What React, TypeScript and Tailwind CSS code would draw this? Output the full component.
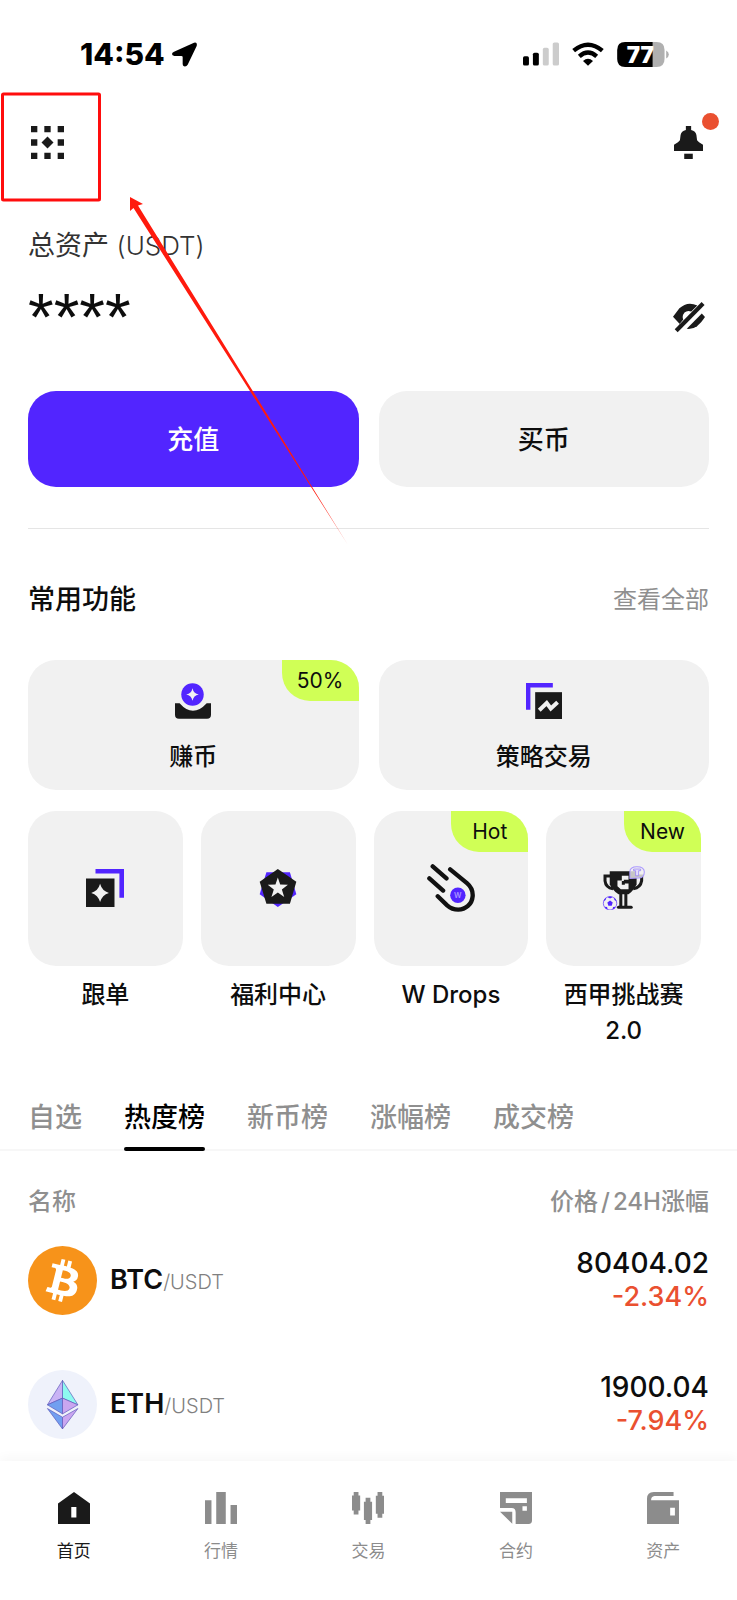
import type { ReactNode } from "react";

type IconProps = { className?: string };

const MenuIcon = ({ className }: IconProps) => (
  <svg viewBox="0 0 99 99" className={className} fill="#1a1a1a" aria-hidden="true">
    <path d="M0 0h19v19H0zM40 0h19v19H40zM80 0h19v19H80zM0 40h19v19H0zM80 40h19v19H80zM0 80h19v19H0zM40 80h19v19H40zM80 80h19v19H80z" />
    <path d="M49.500 31.500L67.500 49.500L49.500 67.500L31.500 49.500z" />
  </svg>
);

const BellIcon = ({ className }: IconProps) => (
  <svg viewBox="0 0 88 100" className={className} fill="#1a1a1a" aria-hidden="true">
    <path d="M36 0H52V12Q66 15 68 27L70 43L76 49L88 57V76H0V57L12 49L18 43L20 27Q22 15 36 12z" />
    <path d="M31 84h26v16H31z" />
  </svg>
);

const EyeOffIcon = ({ className }: IconProps) => (
  <svg viewBox="0 0 100 94" className={className} fill="#1a1a1a" aria-hidden="true">
    <path d="M0 46L20 20Q45 -4 76 11L57 30Q45 25 36 33Q27 44 32 55L20 70L24 72Z" />
    <path d="M90 36L100 47Q88 66 75 76Q62 86 43 84Z" />
    <path d="M10 90L94 5" stroke="#1a1a1a" strokeWidth="13" fill="none" />
  </svg>
);

const LocationIcon = ({ className }: IconProps) => (
  <svg viewBox="0 0 75 73" className={className} aria-hidden="true">
    <path d="M66 1Q77 -2 74 11L47 67Q43 74 36 72Q32 71 32 65V43Q31 41 28 41H7Q0 40 0 35Q0 30 6 28Z" />
  </svg>
);

const SignalIcon = ({ className }: IconProps) => (
  <svg viewBox="0 0 109 70" className={className} aria-hidden="true">
    <rect x="0" y="42" width="18" height="28" rx="5" />
    <rect x="30" y="31" width="18" height="39" rx="5" />
    <rect x="60" y="16" width="18" height="54" rx="5" fill="#ccc" />
    <rect x="90" y="0" width="19" height="70" rx="5" fill="#ccc" />
  </svg>
);

const WifiIcon = ({ className }: IconProps) => (
  <svg viewBox="0 0 96 70" className={className} aria-hidden="true">
    <path d="M5 25Q48 -11 91 25" fill="none" stroke="#000" strokeWidth="13" />
    <path d="M22 42Q48 19 74 42" fill="none" stroke="#000" strokeWidth="13" />
    <path d="M48 70L33 56Q48 42 63 56Z" />
  </svg>
);

const BatteryIcon = ({ className }: IconProps) => (
  <svg viewBox="0 0 157 76" className={className} role="img" aria-label="77">
    <path d="M108 0H120Q144 0 144 24V52Q144 76 120 76H108z" fill="#b0b0b0" />
    <path d="M108 0H24Q0 0 0 24V52Q0 76 24 76H108z" />
    <path d="M149 26Q157 30 157 38Q157 46 149 50z" fill="#b0b0b0" />
    <text x="70" y="63" textAnchor="middle" fontSize="68" fontWeight="900" fill="#fff">
      77
    </text>
  </svg>
);

const EarnIcon = ({ className }: IconProps) => (
  <svg viewBox="0 0 109 107" className={className} aria-hidden="true">
    <circle cx="53" cy="34" r="34" fill="#5225ff" />
    <path d="M53 15Q56 31 72 34Q56 37 53 53Q50 37 34 34Q50 31 53 15z" fill="#f1f1f1" />
    <path d="M0 60H14Q54 106 96 60H109V95Q109 107 97 107H12Q0 107 0 95z" fill="#1a1a1a" />
  </svg>
);

const StrategyIcon = ({ className }: IconProps) => (
  <svg viewBox="0 0 106 106" className={className} aria-hidden="true">
    <path d="M0 0H79V13H13V79H0z" fill="#5225ff" />
    <path d="M27 27h79v79H27z" fill="#1a1a1a" />
    <path d="M39 80L61 59L73 75L93 57" fill="none" stroke="#f1f1f1" strokeWidth="12" />
  </svg>
);

const CopyTradeIcon = ({ className }: IconProps) => (
  <svg viewBox="0 0 116 116" className={className} aria-hidden="true">
    <path d="M29 0H116V88H102V14H29z" fill="#5225ff" />
    <path d="M0 29h87v87H0z" fill="#1a1a1a" />
    <path d="M43 45Q49 67 70 73Q49 79 43 101Q37 79 16 73Q37 67 43 45z" fill="#f1f1f1" />
  </svg>
);

const BenefitIcon = ({ className }: IconProps) => (
  <svg viewBox="0 0 109 113" className={className} aria-hidden="true">
    <path d="M54 113L0 75L20 10H90L109 75z" fill="#5225ff" />
    <path d="M54 0L109 38L90 103H20L0 38z" fill="#1a1a1a" />
    <path
      d="M54 25L61 46L84 47L66 61L73 83L54 70L35 83L42 61L24 47L47 46z"
      fill="#f1f1f1"
    />
  </svg>
);

const DropsIcon = ({ className }: IconProps) => (
  <svg viewBox="0 0 143 143" className={className} aria-hidden="true">
    <g fill="none" stroke="#111" strokeWidth="13" strokeLinecap="round">
      <path d="M17 7L58 43M7 43L48 79" />
      <path d="M69 16L119 57C132 68 137 82 136 96C134 120 115 136 93 136C80 136 69 131 60 123L32 96" />
    </g>
    <circle cx="92" cy="93" r="23" fill="#5225ff" />
    <text x="92" y="101" textAnchor="middle" fontSize="22" fontWeight="600" fill="#a996ff">
      W
    </text>
  </svg>
);

const TrophyIcon = ({ className }: IconProps) => (
  <svg viewBox="0 0 125 131" className={className} aria-hidden="true">
    <g fill="none" stroke="#1a1a1a" strokeWidth="9">
      <path d="M22 30H6V44Q8 64 30 68" />
      <path d="M98 30H115V44Q112 64 90 68" />
      <path d="M53 78V123M68 78V123" />
      <path d="M46 123H84" strokeLinecap="round" />
    </g>
    <path d="M20 16H100V54Q94 70 76 84H46Q26 70 20 54z" fill="#1a1a1a" />
    <path d="M56 29H76V41H62V45H56V56H65V52H76V69H53L43 60V43H56z" fill="#f1f1f1" />
    <path
      d="M80 37V17Q80 2 101 2Q123 2 123 18Q123 36 105 36z"
      fill="#f1f1f1"
      fillOpacity=".8"
      stroke="#a996ff"
      strokeWidth="3"
    />
    <path d="M91 9H112V14H106V29H97V14H91z" fill="#e4defc" stroke="#8d76f5" strokeWidth="2" />
    <circle cx="21" cy="111" r="20" fill="#f1f1f1" stroke="#5225ff" strokeWidth="2" />
    <g fill="#5225ff">
      <path d="M21 103L29 109L26 118H16L13 109z" />
      <path d="M14 93L21 97L28 93L24 91H18zM2 105L8 101L9 94L4 99zM40 105L34 101L33 94L38 99zM5 121L12 122L14 129L8 127zM37 121L30 122L28 129L34 127z" />
    </g>
  </svg>
);

const BtcIcon = ({ className }: IconProps) => (
  <svg viewBox="0 0 32 32" className={className} aria-hidden="true">
    <circle cx="16" cy="16" r="16" fill="#f7931a" />
    <path
      fill="#fff"
      d="M23.189 14.02c.314-2.096-1.283-3.223-3.465-3.975l.708-2.84-1.728-.43-.69 2.765c-.454-.114-.92-.22-1.385-.326l.695-2.783L15.596 6l-.708 2.839c-.376-.086-.746-.17-1.104-.26l.002-.009-2.384-.595-.46 1.846s1.283.294 1.256.312c.7.175.826.638.805 1.006l-.806 3.235c.048.012.11.03.18.057l-.183-.045-1.13 4.532c-.086.212-.303.531-.793.41.018.025-1.256-.313-1.256-.313l-.858 1.978 2.25.561c.418.105.828.215 1.231.318l-.715 2.872 1.727.43.708-2.84c.472.127.93.245 1.378.357l-.706 2.828 1.728.43.715-2.866c2.948.558 5.164.333 6.097-2.333.752-2.146-.037-3.385-1.588-4.192 1.13-.26 1.98-1.003 2.207-2.538zm-3.95 5.538c-.533 2.147-4.148.986-5.32.695l.95-3.805c1.172.293 4.929.872 4.37 3.11zm.535-5.569c-.487 1.953-3.495.96-4.47.717l.86-3.45c.975.243 4.118.696 3.61 2.733z"
    />
  </svg>
);

const EthIcon = ({ className }: IconProps) => (
  <svg viewBox="0 0 206 206" className={className} aria-hidden="true">
    <circle cx="103" cy="103" r="103" fill="#eff2fb" />
    <g stroke="#5c55b8" strokeWidth="2" strokeLinejoin="round">
      <path d="M103 31L58 104L103 84z" fill="#c9b3f5" />
      <path d="M103 31L149 104L103 84z" fill="#8dfaf0" />
      <path d="M58 104L103 84V131z" fill="#719ff0" />
      <path d="M149 104L103 84V131z" fill="#caa6f0" />
      <path d="M58 115L103 141V176z" fill="#719ff0" />
      <path d="M149 115L103 141V176z" fill="#caa6f0" />
    </g>
  </svg>
);

const NavSvg = ({ children }: { children: ReactNode }) => (
  <svg viewBox="0 0 94 94" className="h-8 w-8" fill="currentColor" fillRule="evenodd" aria-hidden="true">
    {children}
  </svg>
);

const navItems = [
  {
    label: "首页",
    active: true,
    icon: <path d="M47 0L94 34V94H0V34zM39 44V75H54V44z" />,
  },
  {
    label: "行情",
    icon: <path d="M0 24h19v70H0zM33 0h28v94H33zM75 38h19v56H75z" />,
  },
  {
    label: "交易",
    icon: (
      <path d="M5 0H19V10H24V54H19V66H5V54H0V10H5zM40 17H54V29H59V82H54V94H40V82H35V29H40zM75 0H89V11H94V64H89V76H75V64H70V11H75z" />
    ),
  },
  {
    label: "合约",
    icon: (
      <path d="M0 0H94V84Q94 94 84 94H46V60Q46 47 34 47H0zM17 18V32H79V18zM66 42V55H79V42zM0 58H36V93z" />
    ),
  },
  {
    label: "资产",
    icon: <path d="M20 0H78V12H22Q12 13 12 24H94V94H0V20Q0 0 20 0zM68 46V69H82V46z" />,
  },
];

const wideFeatures = [
  { label: "赚币", badge: "50%", icon: <EarnIcon className="h-9 w-9" /> },
  { label: "策略交易", icon: <StrategyIcon className="h-9 w-9" /> },
];

const features = [
  { label: "跟单", icon: <CopyTradeIcon className="h-[38px] w-[38px]" /> },
  { label: "福利中心", icon: <BenefitIcon className="h-[38px] w-[38px]" /> },
  { label: "W Drops", badge: "Hot", icon: <DropsIcon className="h-12 w-12" /> },
  { label: "西甲挑战赛 2.0", badge: "New", icon: <TrophyIcon className="h-11 w-11" /> },
];

const tabs = ["自选", "热度榜", "新币榜", "涨幅榜", "成交榜"];

const coins = [
  { symbol: "BTC", price: "80404.02", change: "-2.34%", Icon: BtcIcon },
  { symbol: "ETH", price: "1900.04", change: "-7.94%", Icon: EthIcon },
];

const Badge = ({ children }: { children: ReactNode }) => (
  <span className="absolute right-0 top-0 flex h-[41px] w-[77px] items-center justify-center rounded-bl-[28px] rounded-tr-[28px] bg-[#d0ff56] text-[21px] font-normal">
    {children}
  </span>
);

const StatusBar = () => (
  <div className="flex h-[108px] items-center justify-between pl-20 pr-[68px] text-black">
    <div className="flex items-center gap-[7px]">
      <span className="text-[30px] font-extrabold">14:54</span>
      <LocationIcon className="h-[25px] w-[25px]" />
    </div>
    <div className="flex items-center gap-[13px]">
      <SignalIcon className="h-6 w-9" />
      <WifiIcon className="h-6 w-8" />
      <BatteryIcon className="h-[25px] w-[52px]" />
    </div>
  </div>
);

const TopBar = () => (
  <div className="mt-[18px] flex items-center justify-between pl-[31px] pr-[34px]">
    <button aria-label="菜单">
      <MenuIcon className="h-[33px] w-[33px]" />
    </button>
    <button aria-label="通知" className="relative">
      <BellIcon className="h-[33px] w-[29px]" />
      <span className="absolute -right-4 -top-[13px] h-[17px] w-[17px] rounded-full bg-[#ea5030]" />
    </button>
  </div>
);

const Assets = () => (
  <section className="mt-[69px] px-7">
    <div className="text-[27px] leading-9 text-[#333]">
      总资产 <span className="text-[26px] font-light">(USDT)</span>
    </div>
    <div className="mt-[14px] flex h-[78px] items-center justify-between pr-1">
      <span className="font-['Liberation_Sans',sans-serif] text-[66px] leading-[78px]">****</span>
      <button aria-label="显示资产">
        <EyeOffIcon className="h-8 w-8" />
      </button>
    </div>
    <div className="mt-[35px] grid grid-cols-2 gap-5 text-[26px] font-medium">
      <button className="h-24 rounded-[28px] bg-[#5225ff] text-white">充值</button>
      <button className="h-24 rounded-[28px] bg-[#f1f1f1]">买币</button>
    </div>
    <hr className="mt-[41px] border-[#e5e5e5]" />
  </section>
);

const Features = () => (
  <section className="mt-[53px] px-7">
    <div className="flex items-center justify-between leading-9">
      <h2 className="text-[27px] font-medium leading-9">常用功能</h2>
      <a href="#all" className="text-2xl leading-9 text-[#8f8f8f]">
        查看全部
      </a>
    </div>
    <div className="mt-[42px] grid grid-cols-2 gap-5">
      {wideFeatures.map(({ label, badge, icon }) => (
        <button
          key={label}
          className="relative flex h-[130px] flex-col items-center gap-5 rounded-[28px] bg-[#f1f1f1] pt-[23px]"
        >
          {icon}
          <span className="text-2xl font-medium leading-9">{label}</span>
          {badge && <Badge>{badge}</Badge>}
        </button>
      ))}
    </div>
    <div className="mt-[21px] grid grid-cols-4 gap-[18px] pr-2">
      {features.map(({ label, badge, icon }) => (
        <button key={label} className="flex flex-col items-center">
          <span className="relative flex aspect-square w-full items-center justify-center rounded-[28px] bg-[#f1f1f1]">
            {icon}
            {badge && <Badge>{badge}</Badge>}
          </span>
          <span className="mt-[11px] text-2xl font-medium leading-9">{label}</span>
        </button>
      ))}
    </div>
  </section>
);

const Market = () => (
  <section className="mt-[51px]">
    <div role="tablist" className="flex gap-[42px] border-b-2 border-[#f7f7f7] px-7">
      {tabs.map((tab, i) => (
        <button
          key={tab}
          role="tab"
          aria-selected={i === 1}
          className={
            i === 1
              ? "relative pb-[13px] text-[27px] font-medium leading-9 text-black"
              : "relative pb-[13px] text-[27px] font-medium leading-9 text-[#8f8f8f]"
          }
        >
          {tab}
          {i === 1 && <span className="absolute inset-x-0 -bottom-0.5 h-1 rounded-full bg-black" />}
        </button>
      ))}
    </div>
    <div className="mt-[33px] px-7">
      <table className="w-full">
        <thead className="text-2xl leading-9 text-[#8f8f8f]">
          <tr>
            <th className="p-0 pb-[26px] text-left font-medium">名称</th>
            <th className="p-0 pb-[26px] text-right font-medium">
              价格<span className="mx-[3px]">/</span>24H涨幅
            </th>
          </tr>
        </thead>
        <tbody>
          {coins.map(({ symbol, price, change, Icon }) => (
            <tr key={symbol} className="group">
              <td className="p-0 pb-[55px] group-last:pb-[22px]">
                <div className="flex items-center">
                  <Icon className="h-[69px] w-[69px]" />
                  <div className="ml-[13px] text-[27px] font-semibold">
                    {symbol}
                    <span className="text-[20px] font-light text-[#808080]">/USDT</span>
                  </div>
                </div>
              </td>
              <td className="p-0 pb-[55px] text-right text-[28px] font-medium leading-[33px] group-last:pb-[22px]">
                <div>{price}</div>
                <div className="text-[27px] text-[#ea5030]">{change}</div>
              </td>
            </tr>
          ))}
        </tbody>
      </table>
    </div>
  </section>
);

const BottomNav = () => (
  <nav className="grid grid-cols-5 bg-white pb-9 pt-[31px] shadow-[0_-4px_10px_rgba(0,0,0,0.03)]">
    {navItems.map(({ label, active, icon }) => (
      <a
        key={label}
        href="#nav"
        className={
          active
            ? "flex flex-col items-center gap-[15px] text-[#1a1a1a]"
            : "flex flex-col items-center gap-[15px] text-[#8c8c8c]"
        }
      >
        <NavSvg>{icon}</NavSvg>
        <span className="text-[17px] leading-6">{label}</span>
      </a>
    ))}
  </nav>
);

// Red frame around the menu button, with the arrow that points at it.
const Callout = () => (
  <svg
    width="355"
    height="550"
    viewBox="0 0 355 550"
    className="pointer-events-none absolute left-0 top-0"
    aria-hidden="true"
  >
    <defs>
      <linearGradient id="tail" gradientUnits="userSpaceOnUse" x1="130" y1="197" x2="348" y2="545">
        <stop offset="0" stopColor="#ff1a0d" />
        <stop offset=".85" stopColor="#ff1a0d" />
        <stop offset="1" stopColor="#ff1a0d" stopOpacity=".6" />
      </linearGradient>
    </defs>
    <rect x="2.500" y="94" width="97" height="106" rx="1" fill="none" stroke="#ff0d0d" strokeWidth="3" />
    <path d="M130 197L143 204L138 205.500L348 545L133.500 208L130 211z" fill="url(#tail)" />
  </svg>
);

export default function App() {
  return (
    <div
      lang="zh-CN"
      className="relative overflow-hidden bg-white font-['Inter','Noto_Sans_CJK_SC',sans-serif] text-[#0d0d0d]"
    >
      <StatusBar />
      <TopBar />
      <Assets />
      <Features />
      <Market />
      <BottomNav />
      <Callout />
    </div>
  );
}
